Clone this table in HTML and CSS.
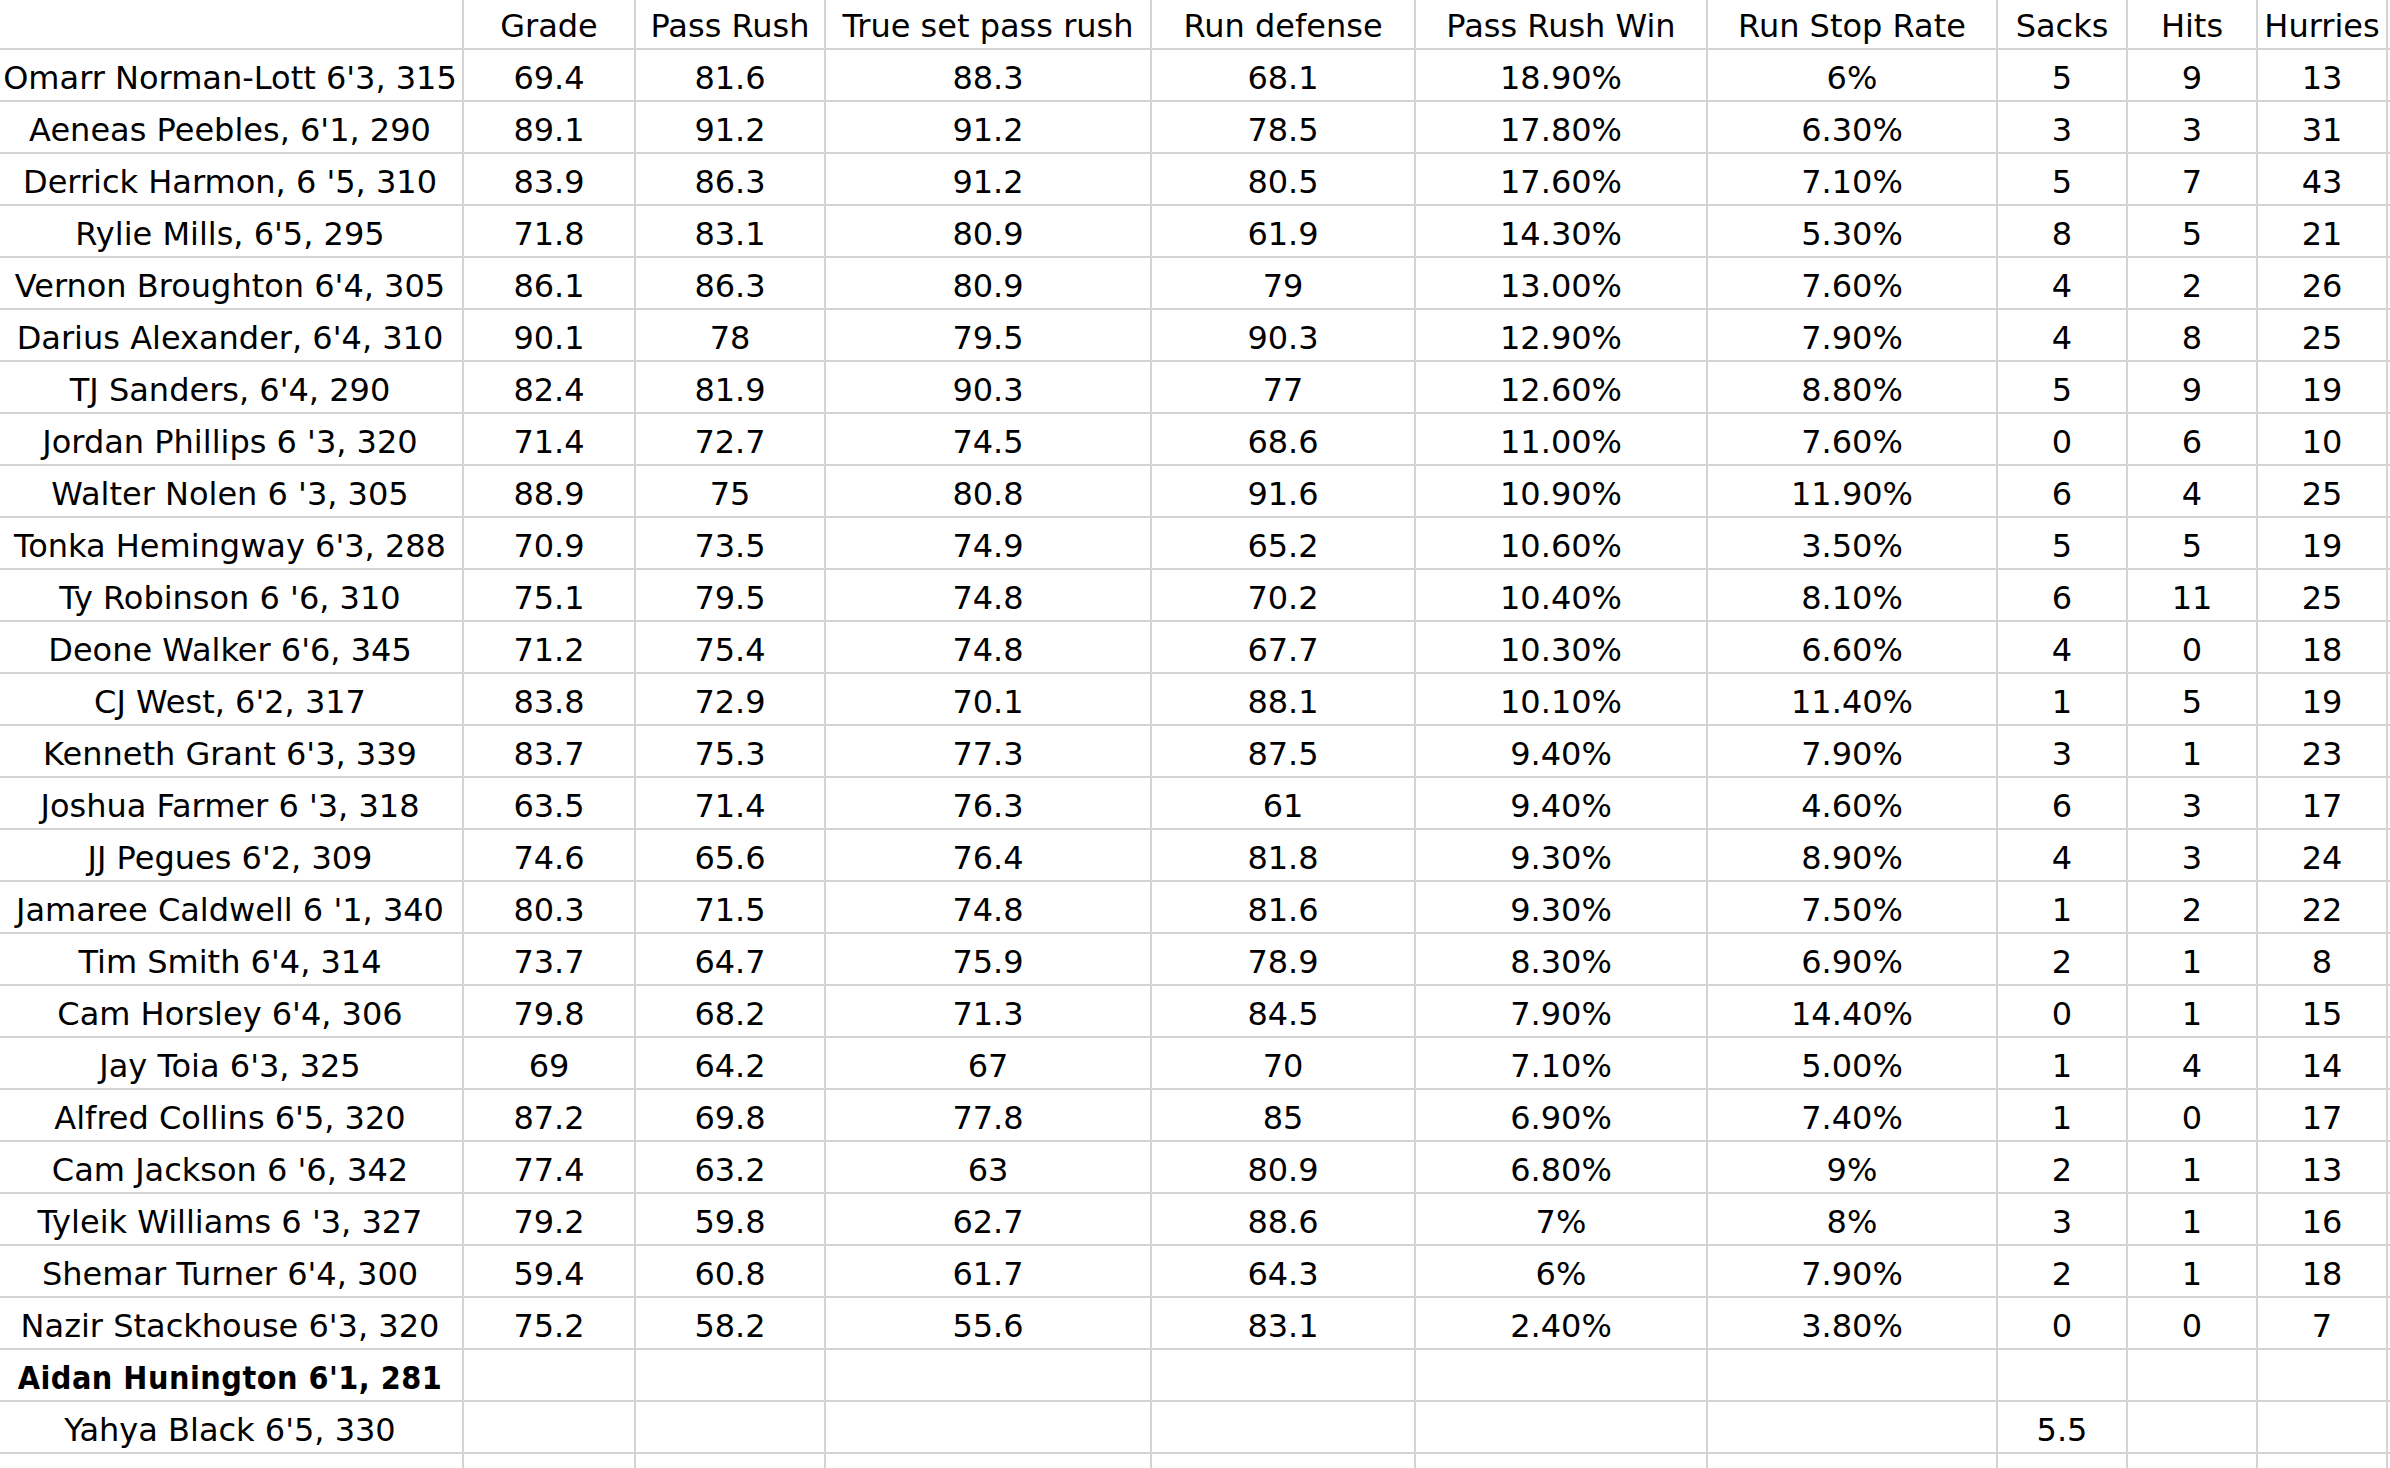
FILE: index.html
```html
<!DOCTYPE html>
<html>
<head>
<meta charset="utf-8">
<link rel="stylesheet" href="styles.css">
</head>
<body>
<div class="sheet">
  <div class="row head"><div class="c"></div><div class="c">Grade</div><div class="c">Pass Rush</div><div class="c">True set pass rush</div><div class="c">Run defense</div><div class="c">Pass Rush Win</div><div class="c">Run Stop Rate</div><div class="c">Sacks</div><div class="c">Hits</div><div class="c">Hurries</div><div class="c"></div></div>
  <div class="row"><div class="c">Omarr Norman-Lott 6'3, 315</div><div class="c">69.4</div><div class="c">81.6</div><div class="c">88.3</div><div class="c">68.1</div><div class="c">18.90%</div><div class="c">6%</div><div class="c">5</div><div class="c">9</div><div class="c">13</div><div class="c"></div></div>
  <div class="row"><div class="c">Aeneas Peebles, 6'1, 290</div><div class="c">89.1</div><div class="c">91.2</div><div class="c">91.2</div><div class="c">78.5</div><div class="c">17.80%</div><div class="c">6.30%</div><div class="c">3</div><div class="c">3</div><div class="c">31</div><div class="c"></div></div>
  <div class="row"><div class="c">Derrick Harmon, 6 '5, 310</div><div class="c">83.9</div><div class="c">86.3</div><div class="c">91.2</div><div class="c">80.5</div><div class="c">17.60%</div><div class="c">7.10%</div><div class="c">5</div><div class="c">7</div><div class="c">43</div><div class="c"></div></div>
  <div class="row"><div class="c">Rylie Mills, 6'5, 295</div><div class="c">71.8</div><div class="c">83.1</div><div class="c">80.9</div><div class="c">61.9</div><div class="c">14.30%</div><div class="c">5.30%</div><div class="c">8</div><div class="c">5</div><div class="c">21</div><div class="c"></div></div>
  <div class="row"><div class="c">Vernon Broughton 6'4, 305</div><div class="c">86.1</div><div class="c">86.3</div><div class="c">80.9</div><div class="c">79</div><div class="c">13.00%</div><div class="c">7.60%</div><div class="c">4</div><div class="c">2</div><div class="c">26</div><div class="c"></div></div>
  <div class="row"><div class="c">Darius Alexander, 6'4, 310</div><div class="c">90.1</div><div class="c">78</div><div class="c">79.5</div><div class="c">90.3</div><div class="c">12.90%</div><div class="c">7.90%</div><div class="c">4</div><div class="c">8</div><div class="c">25</div><div class="c"></div></div>
  <div class="row"><div class="c">TJ Sanders, 6'4, 290</div><div class="c">82.4</div><div class="c">81.9</div><div class="c">90.3</div><div class="c">77</div><div class="c">12.60%</div><div class="c">8.80%</div><div class="c">5</div><div class="c">9</div><div class="c">19</div><div class="c"></div></div>
  <div class="row"><div class="c">Jordan Phillips 6 '3, 320</div><div class="c">71.4</div><div class="c">72.7</div><div class="c">74.5</div><div class="c">68.6</div><div class="c">11.00%</div><div class="c">7.60%</div><div class="c">0</div><div class="c">6</div><div class="c">10</div><div class="c"></div></div>
  <div class="row"><div class="c">Walter Nolen 6 '3, 305</div><div class="c">88.9</div><div class="c">75</div><div class="c">80.8</div><div class="c">91.6</div><div class="c">10.90%</div><div class="c">11.90%</div><div class="c">6</div><div class="c">4</div><div class="c">25</div><div class="c"></div></div>
  <div class="row"><div class="c">Tonka Hemingway 6'3, 288</div><div class="c">70.9</div><div class="c">73.5</div><div class="c">74.9</div><div class="c">65.2</div><div class="c">10.60%</div><div class="c">3.50%</div><div class="c">5</div><div class="c">5</div><div class="c">19</div><div class="c"></div></div>
  <div class="row"><div class="c">Ty Robinson 6 '6, 310</div><div class="c">75.1</div><div class="c">79.5</div><div class="c">74.8</div><div class="c">70.2</div><div class="c">10.40%</div><div class="c">8.10%</div><div class="c">6</div><div class="c">11</div><div class="c">25</div><div class="c"></div></div>
  <div class="row"><div class="c">Deone Walker 6'6, 345</div><div class="c">71.2</div><div class="c">75.4</div><div class="c">74.8</div><div class="c">67.7</div><div class="c">10.30%</div><div class="c">6.60%</div><div class="c">4</div><div class="c">0</div><div class="c">18</div><div class="c"></div></div>
  <div class="row"><div class="c">CJ West, 6'2, 317</div><div class="c">83.8</div><div class="c">72.9</div><div class="c">70.1</div><div class="c">88.1</div><div class="c">10.10%</div><div class="c">11.40%</div><div class="c">1</div><div class="c">5</div><div class="c">19</div><div class="c"></div></div>
  <div class="row"><div class="c">Kenneth Grant 6'3, 339</div><div class="c">83.7</div><div class="c">75.3</div><div class="c">77.3</div><div class="c">87.5</div><div class="c">9.40%</div><div class="c">7.90%</div><div class="c">3</div><div class="c">1</div><div class="c">23</div><div class="c"></div></div>
  <div class="row"><div class="c">Joshua Farmer 6 '3, 318</div><div class="c">63.5</div><div class="c">71.4</div><div class="c">76.3</div><div class="c">61</div><div class="c">9.40%</div><div class="c">4.60%</div><div class="c">6</div><div class="c">3</div><div class="c">17</div><div class="c"></div></div>
  <div class="row"><div class="c">JJ Pegues 6'2, 309</div><div class="c">74.6</div><div class="c">65.6</div><div class="c">76.4</div><div class="c">81.8</div><div class="c">9.30%</div><div class="c">8.90%</div><div class="c">4</div><div class="c">3</div><div class="c">24</div><div class="c"></div></div>
  <div class="row"><div class="c">Jamaree Caldwell 6 '1, 340</div><div class="c">80.3</div><div class="c">71.5</div><div class="c">74.8</div><div class="c">81.6</div><div class="c">9.30%</div><div class="c">7.50%</div><div class="c">1</div><div class="c">2</div><div class="c">22</div><div class="c"></div></div>
  <div class="row"><div class="c">Tim Smith 6'4, 314</div><div class="c">73.7</div><div class="c">64.7</div><div class="c">75.9</div><div class="c">78.9</div><div class="c">8.30%</div><div class="c">6.90%</div><div class="c">2</div><div class="c">1</div><div class="c">8</div><div class="c"></div></div>
  <div class="row"><div class="c">Cam Horsley 6'4, 306</div><div class="c">79.8</div><div class="c">68.2</div><div class="c">71.3</div><div class="c">84.5</div><div class="c">7.90%</div><div class="c">14.40%</div><div class="c">0</div><div class="c">1</div><div class="c">15</div><div class="c"></div></div>
  <div class="row"><div class="c">Jay Toia 6'3, 325</div><div class="c">69</div><div class="c">64.2</div><div class="c">67</div><div class="c">70</div><div class="c">7.10%</div><div class="c">5.00%</div><div class="c">1</div><div class="c">4</div><div class="c">14</div><div class="c"></div></div>
  <div class="row"><div class="c">Alfred Collins 6'5, 320</div><div class="c">87.2</div><div class="c">69.8</div><div class="c">77.8</div><div class="c">85</div><div class="c">6.90%</div><div class="c">7.40%</div><div class="c">1</div><div class="c">0</div><div class="c">17</div><div class="c"></div></div>
  <div class="row"><div class="c">Cam Jackson 6 '6, 342</div><div class="c">77.4</div><div class="c">63.2</div><div class="c">63</div><div class="c">80.9</div><div class="c">6.80%</div><div class="c">9%</div><div class="c">2</div><div class="c">1</div><div class="c">13</div><div class="c"></div></div>
  <div class="row"><div class="c">Tyleik Williams 6 '3, 327</div><div class="c">79.2</div><div class="c">59.8</div><div class="c">62.7</div><div class="c">88.6</div><div class="c">7%</div><div class="c">8%</div><div class="c">3</div><div class="c">1</div><div class="c">16</div><div class="c"></div></div>
  <div class="row"><div class="c">Shemar Turner 6'4, 300</div><div class="c">59.4</div><div class="c">60.8</div><div class="c">61.7</div><div class="c">64.3</div><div class="c">6%</div><div class="c">7.90%</div><div class="c">2</div><div class="c">1</div><div class="c">18</div><div class="c"></div></div>
  <div class="row"><div class="c">Nazir Stackhouse 6'3, 320</div><div class="c">75.2</div><div class="c">58.2</div><div class="c">55.6</div><div class="c">83.1</div><div class="c">2.40%</div><div class="c">3.80%</div><div class="c">0</div><div class="c">0</div><div class="c">7</div><div class="c"></div></div>
  <div class="row"><div class="c bold">Aidan Hunington 6'1, 281</div><div class="c"></div><div class="c"></div><div class="c"></div><div class="c"></div><div class="c"></div><div class="c"></div><div class="c"></div><div class="c"></div><div class="c"></div><div class="c"></div></div>
  <div class="row"><div class="c">Yahya Black 6'5, 330</div><div class="c"></div><div class="c"></div><div class="c"></div><div class="c"></div><div class="c"></div><div class="c"></div><div class="c">5.5</div><div class="c"></div><div class="c"></div><div class="c"></div></div>
  <div class="row"><div class="c"></div><div class="c"></div><div class="c"></div><div class="c"></div><div class="c"></div><div class="c"></div><div class="c"></div><div class="c"></div><div class="c"></div><div class="c"></div><div class="c"></div></div>
</div>
</body>
</html>
```

FILE: styles.css
```css
html, body {
  margin: 0;
  padding: 0;
  background: #ffffff;
  overflow: hidden;
}

.sheet {
  margin-top: -2px;
  margin-left: -2px;
  width: 2600px;
  font-family: "DejaVu Sans", sans-serif;
  font-size: 32px;
  color: #000000;
}

.row {
  display: grid;
  grid-template-columns: 466px 172px 190px 326px 264px 292px 290px 130px 130px 130px 200px;
}

.c {
  box-sizing: border-box;
  height: 52px;
  border-right: 2px solid #d4d4d4;
  border-bottom: 2px solid #d4d4d4;
  padding-top: 3px;
  line-height: 50px;
  white-space: nowrap;
  display: flex;
  justify-content: center;
  align-items: flex-start;
}

.bold {
  font-family: "DejaVu Sans Condensed", "DejaVu Sans", sans-serif;
  font-weight: 700;
  letter-spacing: 0.5px;
}
```
